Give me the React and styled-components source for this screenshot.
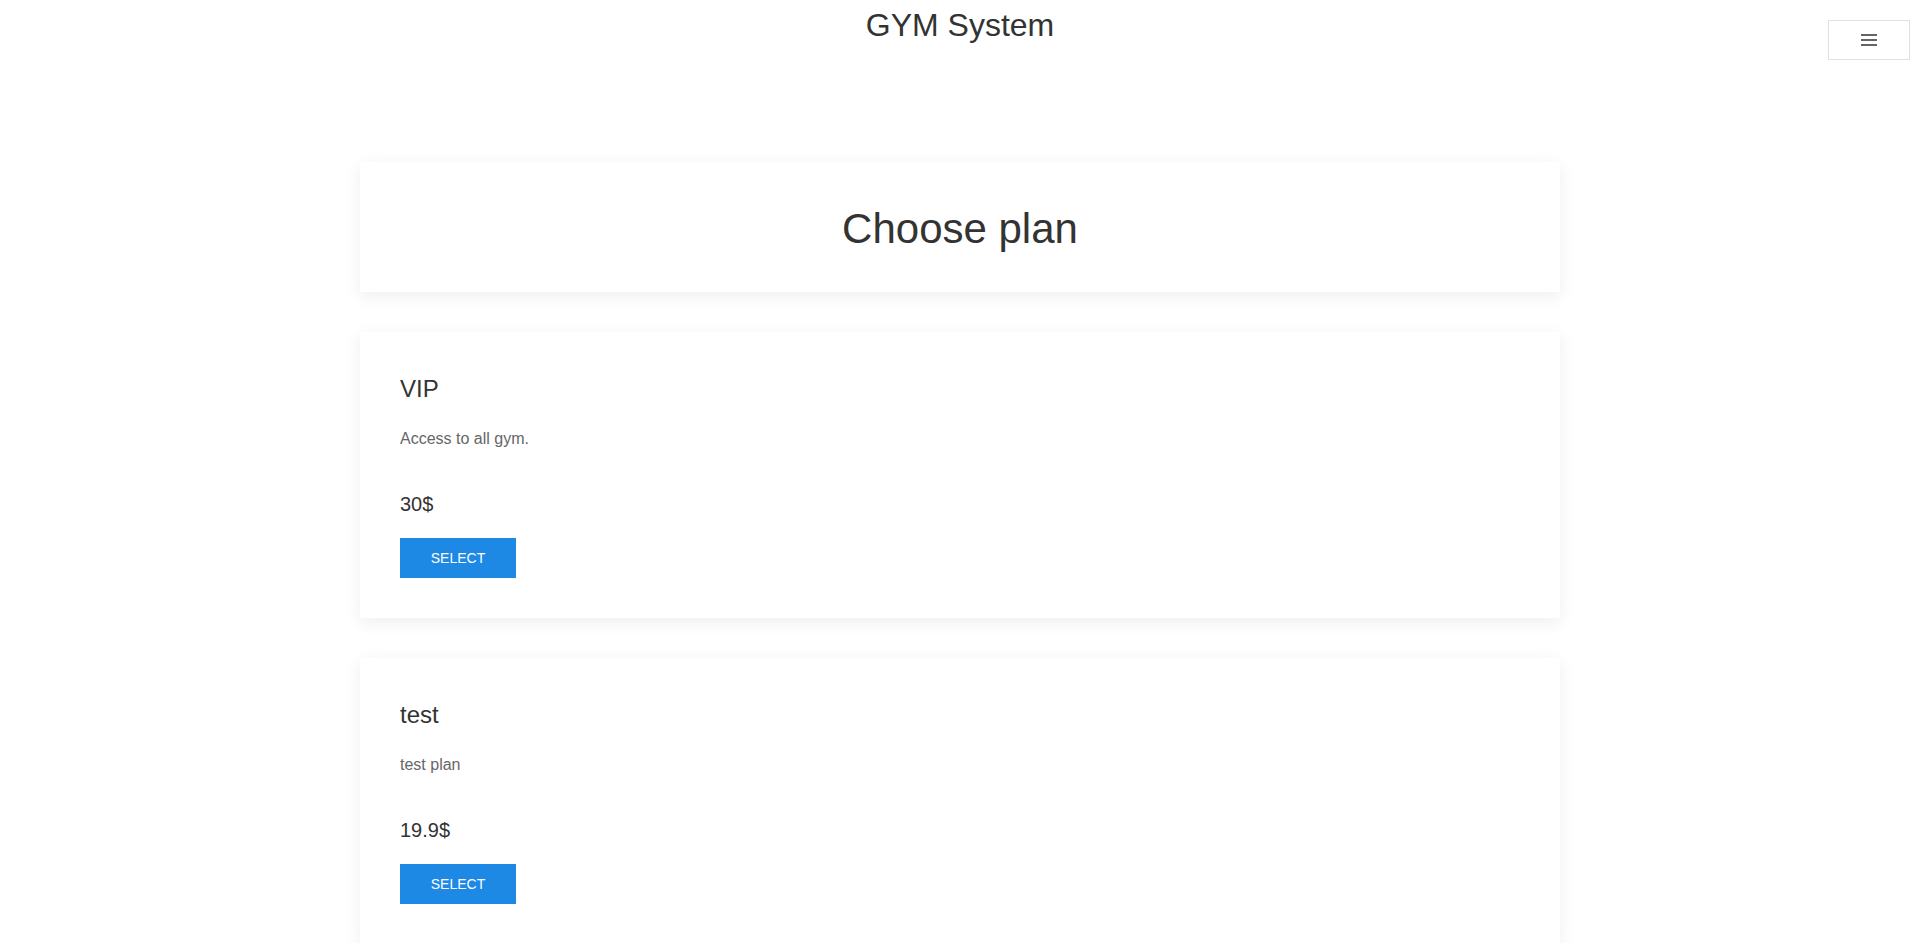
import * as React from 'react';
import styled, { createGlobalStyle } from 'styled-components';

const GlobalStyle = createGlobalStyle`
  body {
    margin: 0;
    background: #fff;
    font-family: 'Liberation Sans', Arial, sans-serif;
    color: #333;
  }
`;

//top bar with the title in the middle and the menu button on the right
const Header = styled.header`
  display: grid;
  grid-template-columns: 1fr auto 1fr;
  align-items: start;
  height: 60px;
  padding: 0 10px;
`;

const SiteTitle = styled.h1`
  grid-column: 2;
  margin: 7px 0 0;
  font-size: 32px;
  line-height: 37px;
  font-weight: 400;
  color: #333;
`;

const MenuButton = styled.button`
  grid-column: 3;
  justify-self: end;
  margin-top: 20px;
  width: 82px;
  height: 40px;
  display: flex;
  align-items: center;
  justify-content: center;
  background: #fff;
  border: 1px solid #e0e0e0;
  padding: 0;
  cursor: pointer;
`;

const Main = styled.main`
  display: flex;
  flex-direction: column;
  gap: 40px;
  width: 1200px;
  margin: 0 auto;
  padding: 102px 0 60px;
`;

//white card with soft shadow
const Card = styled.section`
  background: #fff;
  box-shadow: 0 4px 16px rgba(0, 0, 0, 0.07);
  padding: ${(p) => (p.$center ? '42px 40px 38px' : '42px 40px 40px')};
  text-align: ${(p) => (p.$center ? 'center' : 'left')};
`;

const PageTitle = styled.h2`
  margin: 0;
  font-size: 42px;
  line-height: 50px;
  font-weight: 400;
  color: #333;
`;

const PlanName = styled.h3`
  margin: 0 0 24px;
  font-size: 24px;
  line-height: 30px;
  font-weight: 400;
  color: #333;
`;

const PlanText = styled.p`
  margin: 0 0 43px;
  font-size: 16px;
  line-height: 21px;
  color: #666;
`;

const Price = styled.div`
  font-size: 20px;
  line-height: 24px;
  color: #333;
  margin-bottom: 22px;
`;

const SelectButton = styled.button`
  width: 116px;
  height: 40px;
  border: none;
  background: #1e88e5;
  color: #fff;
  font-family: 'Liberation Sans', Arial, sans-serif;
  font-size: 14px;
  text-transform: uppercase;
  cursor: pointer;
  display: block;
`;

const plans = [
  { name: 'VIP', text: 'Access to all gym.', price: '30$' },
  { name: 'test', text: 'test plan', price: '19.9$' },
];

export default function App() {
  return (
    <>
      <GlobalStyle />
      <Header>
        <SiteTitle>GYM System</SiteTitle>
        <MenuButton aria-label="menu">
          <svg width="16" height="12" viewBox="0 0 16 12">
            <path d="M0 1h16M0 6h16M0 11h16" stroke="#333" strokeWidth="1.5" />
          </svg>
        </MenuButton>
      </Header>
      <Main>
        <Card $center>
          <PageTitle>Choose plan</PageTitle>
        </Card>
        {plans.map((plan) => (
          <Card key={plan.name}>
            <PlanName>{plan.name}</PlanName>
            <PlanText>{plan.text}</PlanText>
            <Price>{plan.price}</Price>
            <SelectButton>Select</SelectButton>
          </Card>
        ))}
      </Main>
    </>
  );
}
